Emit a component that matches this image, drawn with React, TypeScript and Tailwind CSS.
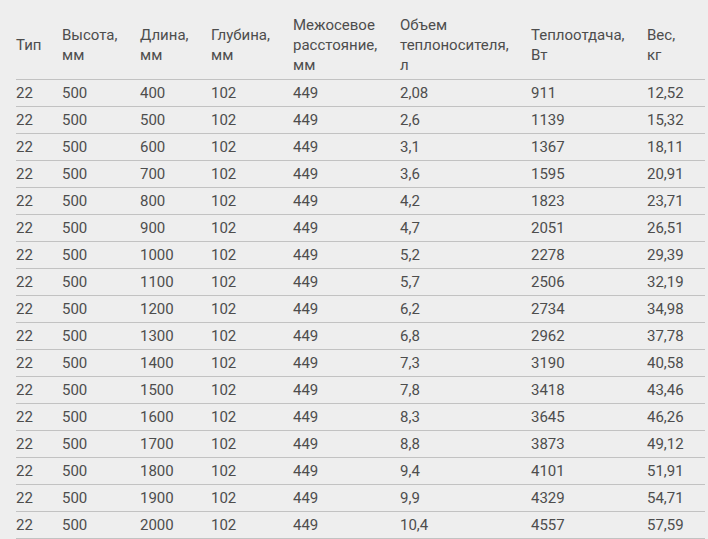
import React from "react";

const header: string[][] = [
  ["Тип"],
  ["Высота,", "мм"],
  ["Длина,", "мм"],
  ["Глубина,", "мм"],
  ["Межосевое", "расстояние,", "мм"],
  ["Объем", "теплоносителя,", "л"],
  ["Теплоотдача,", "Вт"],
  ["Вес,", "кг"],
];

const rows: string[][] = [
  ["400", "2,08", "911", "12,52"],
  ["500", "2,6", "1139", "15,32"],
  ["600", "3,1", "1367", "18,11"],
  ["700", "3,6", "1595", "20,91"],
  ["800", "4,2", "1823", "23,71"],
  ["900", "4,7", "2051", "26,51"],
  ["1000", "5,2", "2278", "29,39"],
  ["1100", "5,7", "2506", "32,19"],
  ["1200", "6,2", "2734", "34,98"],
  ["1300", "6,8", "2962", "37,78"],
  ["1400", "7,3", "3190", "40,58"],
  ["1500", "7,8", "3418", "43,46"],
  ["1600", "8,3", "3645", "46,26"],
  ["1700", "8,8", "3873", "49,12"],
  ["1800", "9,4", "4101", "51,91"],
  ["1900", "9,9", "4329", "54,71"],
  ["2000", "10,4", "4557", "57,59"],
];

const widths = [46, 78, 71, 82, 107, 131, 116, 58];

export default function App() {
  return (
    <div
      className="w-[708px] h-[539px] overflow-hidden bg-[#eeeeee] text-[#4d4d4d] pt-[11px] pl-4"
      style={{ fontFamily: "Roboto, 'Noto Sans', sans-serif" }}
    >
      <table className="border-collapse table-fixed w-[689px] text-[15px]">
        <colgroup>
          {widths.map((w, i) => (
            <col key={i} style={{ width: w }} />
          ))}
        </colgroup>
        <thead>
          <tr className="border-b border-[#c2c2c2]">
            {header.map((h, i) => (
              <th
                key={i}
                className="text-left font-normal align-middle py-1 leading-5 whitespace-nowrap"
              >
                {h.map((l, j) => (
                  <div key={j}>{l}</div>
                ))}
              </th>
            ))}
          </tr>
        </thead>
        <tbody>
          {rows.map((r, i) => (
            <tr key={i} className="border-b border-[#c2c2c2] h-[27px]">
              <td className="p-0 leading-[26px]">22</td>
              <td className="p-0 leading-[26px]">500</td>
              <td className="p-0 leading-[26px]">{r[0]}</td>
              <td className="p-0 leading-[26px]">102</td>
              <td className="p-0 leading-[26px]">449</td>
              <td className="p-0 leading-[26px]">{r[1]}</td>
              <td className="p-0 leading-[26px]">{r[2]}</td>
              <td className="p-0 leading-[26px]">{r[3]}</td>
            </tr>
          ))}
        </tbody>
      </table>
    </div>
  );
}
